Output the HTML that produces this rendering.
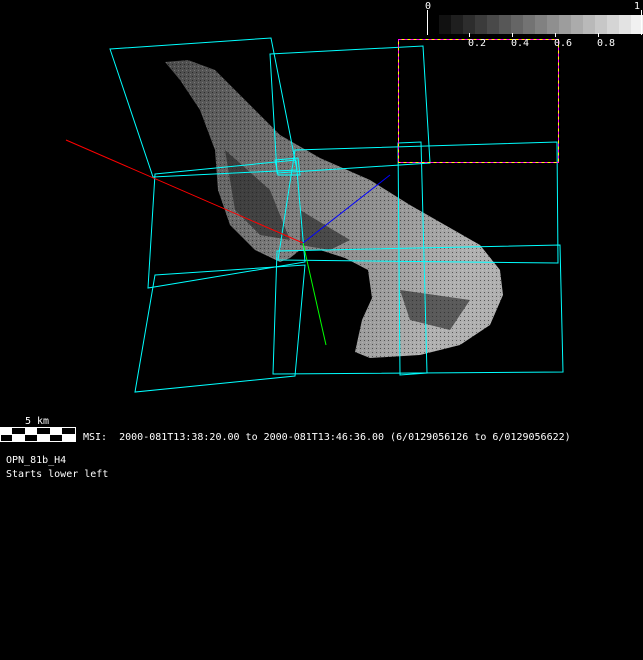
<!DOCTYPE html>
<html><head><meta charset="utf-8"><style>
html,body{margin:0;padding:0;background:#000;}
body{width:643px;height:660px;overflow:hidden;position:relative;font-family:"DejaVu Sans Mono","Liberation Mono",monospace;color:#fff;}
.t{position:absolute;font-size:10px;white-space:pre;line-height:13px;}
</style></head><body>
<svg width="643" height="660" style="position:absolute;left:0;top:0">
<defs>
<linearGradient id="g" x1="0" y1="0" x2="1" y2="0.4">
<stop offset="0" stop-color="#4a4a4a"/><stop offset="0.5" stop-color="#7a7a7a"/><stop offset="1" stop-color="#b0b0b0"/>
</linearGradient>
<pattern id="p" width="4" height="4" patternUnits="userSpaceOnUse"><rect width="4" height="4" fill="none"/><rect width="1" height="1" fill="#000" opacity="0.5"/><rect x="2" y="2" width="1" height="1" fill="#fff" opacity="0.2"/></pattern>
</defs>
<polygon fill="url(#g)" points="165,62 188,60 215,70 245,100 280,135 320,158 370,180 410,205 445,225 480,245 500,270 503,295 490,325 460,345 420,355 370,358 355,352 362,320 372,298 368,270 345,258 320,250 300,250 290,258 280,262 255,250 230,225 218,190 215,150 200,110 180,80"/>
<polygon fill="url(#p)" points="165,62 188,60 215,70 245,100 280,135 320,158 370,180 410,205 445,225 480,245 500,270 503,295 490,325 460,345 420,355 370,358 355,352 362,320 372,298 368,270 345,258 320,250 300,250 290,258 280,262 255,250 230,225 218,190 215,150 200,110 180,80"/>
<g fill="#222" opacity="0.6">
<polygon points="225,150 270,190 290,240 260,235 235,210"/>
<polygon points="300,210 350,240 330,250 300,245"/>
<polygon points="400,290 470,300 450,330 410,320"/>
</g>
<g>
<rect x="439" y="15" width="12" height="19" fill="#111"/><rect x="451" y="15" width="12" height="19" fill="#1f1f1f"/><rect x="463" y="15" width="12" height="19" fill="#2d2d2d"/><rect x="475" y="15" width="12" height="19" fill="#3b3b3b"/><rect x="487" y="15" width="12" height="19" fill="#494949"/><rect x="499" y="15" width="12" height="19" fill="#575757"/><rect x="511" y="15" width="12" height="19" fill="#656565"/><rect x="523" y="15" width="12" height="19" fill="#737373"/><rect x="535" y="15" width="12" height="19" fill="#818181"/><rect x="547" y="15" width="12" height="19" fill="#8f8f8f"/><rect x="559" y="15" width="12" height="19" fill="#9d9d9d"/><rect x="571" y="15" width="12" height="19" fill="#ababab"/><rect x="583" y="15" width="12" height="19" fill="#b9b9b9"/><rect x="595" y="15" width="12" height="19" fill="#c7c7c7"/><rect x="607" y="15" width="12" height="19" fill="#d5d5d5"/><rect x="619" y="15" width="12" height="19" fill="#e3e3e3"/><rect x="631" y="15" width="12" height="19" fill="#f1f1f1"/>
<g stroke="#fff" stroke-width="1"><line x1="427.5" y1="10" x2="427.5" y2="35"/><line x1="469.5" y1="33" x2="469.5" y2="37"/><line x1="512.5" y1="33" x2="512.5" y2="37"/><line x1="555.5" y1="33" x2="555.5" y2="37"/><line x1="598.5" y1="33" x2="598.5" y2="37"/><line x1="641.5" y1="10" x2="641.5" y2="35"/></g>
</g>
<g fill="none" stroke="#00ffff" stroke-width="1">
<polygon points="110,49 271,38 297,170 153,177"/>
<polygon points="155,174 296,160 305,262 148,288"/>
<polygon points="155,275 305,265 295,376 135,392"/>
<polygon points="270,54 423,46 430,163 277,173"/>
<polygon points="295,150 557,142 558,263 278,260"/>
<polygon points="277,251 560,245 563,372 273,374"/>
<polygon points="398,143 421,142 427,373 400,375"/>
<polygon points="275,160 298,158 300,175 278,175"/>
</g>
<rect x="398.5" y="39.5" width="160" height="123" fill="none" stroke="#ffff00" stroke-width="1"/>
<rect x="398.5" y="39.5" width="160" height="123" fill="none" stroke="#ff00ff" stroke-width="1" stroke-dasharray="3,3"/>
<line x1="66" y1="140" x2="303" y2="243" stroke="#ff0000"/>
<line x1="303" y1="243" x2="390" y2="175" stroke="#0000ff"/>
<line x1="303" y1="243" x2="326" y2="345" stroke="#00ff00"/>
<rect x="0.5" y="427.5" width="75" height="14" fill="#fff" stroke="#fff"/>
<rect x="12" y="428" width="13" height="6" fill="#000"/><rect x="37" y="428" width="13" height="6" fill="#000"/><rect x="62" y="428" width="13" height="6" fill="#000"/>
<rect x="1" y="435" width="11" height="6" fill="#000"/><rect x="25" y="435" width="12" height="6" fill="#000"/><rect x="50" y="435" width="12" height="6" fill="#000"/>
</svg>
<div class="t" style="left:425px;top:0px">0</div>
<div class="t" style="left:634px;top:0px">1</div>
<div class="t" style="left:468px;top:37px">0.2</div>
<div class="t" style="left:511px;top:37px">0.4</div>
<div class="t" style="left:554px;top:37px">0.6</div>
<div class="t" style="left:597px;top:37px">0.8</div>
<div class="t" style="left:25px;top:415px">5 km</div>
<div class="t" style="left:83px;top:431px">MSI:  2000-081T13:38:20.00 to 2000-081T13:46:36.00 (6/0129056126 to 6/0129056622)</div>
<div class="t" style="left:6px;top:454px">OPN_81b_H4</div>
<div class="t" style="left:6px;top:468px">Starts lower left</div>
</body></html>
